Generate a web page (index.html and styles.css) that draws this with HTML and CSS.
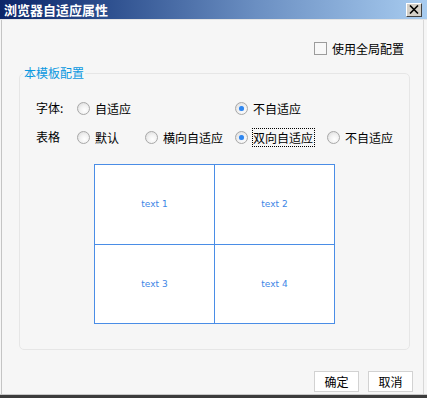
FILE: index.html
```html
<!DOCTYPE html>
<html lang="zh">
<head>
<meta charset="utf-8">
<title>浏览器自适应属性</title>
<link rel="stylesheet" href="styles.css">
</head>
<body>
<div class="dialog">
  <div class="titlebar">
    <span class="title">浏览器自适应属性</span>
    <span class="close"><svg width="10" height="9" viewBox="0 0 10 9"><path d="M1 0.5 L9 8.5 M9 0.5 L1 8.5" stroke="#000" stroke-width="1.6"/></svg></span>
  </div>
  <div class="body">
    <div class="topopts">
      <label class="check"><span class="box"></span><span>使用全局配置</span></label>
    </div>
    <fieldset class="group">
      <legend>本模板配置</legend>
      <div class="opts">
        <span class="lbl">字体:</span>
        <span class="opt"><span class="radio"></span>自适应</span>
        <span class="opt c3"><span class="radio on"></span>不自适应</span>
        <span class="lbl">表格</span>
        <span class="opt"><span class="radio"></span>默认</span>
        <span class="opt"><span class="radio"></span>横向自适应</span>
        <span class="opt"><span class="radio on"></span><span class="focus">双向自适应</span></span>
        <span class="opt"><span class="radio"></span>不自适应</span>
      </div>
      <table class="preview">
        <tr><td>text 1</td><td>text 2</td></tr>
        <tr><td>text 3</td><td>text 4</td></tr>
      </table>
    </fieldset>
    <div class="buttons">
      <button class="btn">确定</button>
      <button class="btn">取消</button>
    </div>
  </div>
  <div class="frame-bottom"></div>
</div>
</body>
</html>
```
FILE: styles.css
```css
html, body {
  margin: 0;
  padding: 0;
  background: #f6f6f6;
}
body {
  width: 427px;
  height: 398px;
  overflow: hidden;
  font-family: "Noto Sans CJK SC", "Liberation Sans", sans-serif;
  font-size: 12px;
  color: #000;
}
.dialog {
  width: 427px;
  height: 398px;
  display: flex;
  flex-direction: column;
  box-sizing: border-box;
}
.titlebar {
  height: 19px;
  flex: none;
  display: flex;
  align-items: center;
  justify-content: space-between;
  background: linear-gradient(to right, #0b2568 0%, #2d4f8e 25%, #6b8fc2 60%, #a8ccf0 100%);
  border-bottom: 1px solid #e4e4e4;
  padding: 0 5px 0 4px;
}
.title {
  color: #fff;
  font-weight: bold;
  font-size: 13px;
  line-height: 19px;
}
.close {
  width: 14px;
  height: 12px;
  background: #d4d0c8;
  border-top: 1px solid #fff;
  border-left: 1px solid #fff;
  border-right: 1px solid #404040;
  border-bottom: 1px solid #404040;
  display: flex;
  align-items: center;
  justify-content: center;
}
.body {
  flex: 1;
  display: flex;
  flex-direction: column;
  border-left: 1px solid #c4c4c4;
  border-right: 1px solid #d8d8d8;
  margin: 0 3px 0 1px;
  background: #f6f6f6;
}
.topopts {
  display: flex;
  justify-content: flex-end;
  padding: 22px 19px 0 0;
}
.check {
  display: flex;
  align-items: center;
  gap: 5px;
  line-height: 13px;
  height: 13px;
}
.box {
  width: 11px;
  height: 11px;
  border: 1px solid #9c9c9c;
  background: #f8f8f8;
}
.group {
  margin: 11px 0 0 17px;
  width: 391px;
  box-sizing: border-box;
  border: 1px solid #e6e6e6;
  border-radius: 5px;
  padding: 18px 0 25px 16px;
}
.group legend {
  color: #0a98e0;
  font-size: 12px;
  line-height: 14px;
  padding: 0 1px;
  margin-left: -13px;
}
.opts {
  display: grid;
  grid-template-columns: 41px 68px 90px 92px auto;
  row-gap: 9px;
}
.lbl {
  grid-column: 1;
  line-height: 20px;
}
.opt {
  display: flex;
  align-items: center;
  gap: 5px;
  height: 20px;
  white-space: nowrap;
}
.c3 {
  grid-column: 4;
}
.radio {
  width: 11px;
  height: 11px;
  flex: none;
  border-radius: 50%;
  border: 1px solid #a8a8a8;
  background: radial-gradient(circle at 60% 65%, #ffffff 0%, #f2f2f2 45%, #d6d6d6 100%);
  position: relative;
}
.radio.on::after {
  content: "";
  position: absolute;
  left: 3px;
  top: 3px;
  width: 5px;
  height: 5px;
  border-radius: 50%;
  background: #2e86f0;
  box-shadow: 0 0 1px #8fbcf5;
}
.focus {
  outline: 1px dotted #000;
  outline-offset: 0;
  line-height: 17px;
  padding: 0 1px 0 0;
}
.preview {
  margin: 17px 0 0 58px;
  width: 241px;
  height: 160px;
  border-collapse: collapse;
  background: #fff;
}
.preview td {
  border: 1px solid #4a8de6;
  width: 50%;
  text-align: center;
  vertical-align: middle;
  color: #3d86e6;
  font-family: "DejaVu Sans", sans-serif;
  font-size: 9px;
  padding: 0;
}
.buttons {
  display: flex;
  justify-content: flex-end;
  gap: 9px;
  padding: 21px 10px 0 0;
}
.btn {
  width: 45px;
  height: 21px;
  box-sizing: border-box;
  border: 1px solid #d2d2d2;
  background: #fff;
  font-family: "Noto Sans CJK SC", sans-serif;
  font-size: 12px;
  padding: 0;
  color: #000;
}
.frame-bottom {
  flex: none;
  height: 3px;
  border-top: 1px solid #c8c8c8;
  background: #3c3c3c;
}
```
